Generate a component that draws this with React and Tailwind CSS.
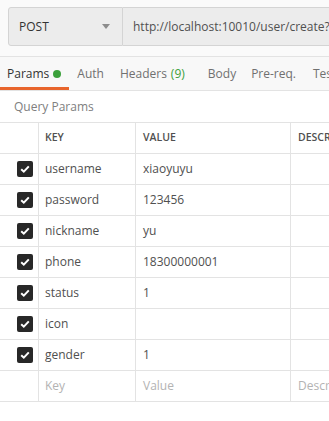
import React from "react";

const rows = [
  { key: "username", value: "xiaoyuyu" },
  { key: "password", value: "123456" },
  { key: "nickname", value: "yu" },
  { key: "phone", value: "18300000001" },
  { key: "status", value: "1" },
  { key: "icon", value: "" },
  { key: "gender", value: "1" },
];

function Check() {
  return (
    <span className="flex h-[16px] w-[16px] items-center justify-center rounded-[2px] bg-[#282828]">
      <svg width="12" height="12" viewBox="0 0 12 12">
        <path d="M2.2 6.2 L4.8 8.7 L9.8 3.4" fill="none" stroke="#fff" strokeWidth="2" />
      </svg>
    </span>
  );
}

export default function App() {
  return (
    <div
      className="h-[421px] w-[329px] overflow-hidden bg-white text-[12px] text-[#505050]"
      style={{ fontFamily: '"Open Sans", "Noto Sans", sans-serif' }}
    >
      {/* request bar */}
      <div className="h-[57px] border-b border-[#e3e3e3] bg-[#fafafa] pl-[8px] pt-[7px]">
        <div className="flex h-[39px] w-[400px]">
          <div className="flex w-[115px] items-center justify-between rounded-l-[3px] border border-[#d4d4d4] bg-[#ececec] pl-[10px] pr-[12px]">
            <span className="text-[12px] text-[#333]">POST</span>
            <svg width="8" height="5" viewBox="0 0 8 5">
              <path d="M0 0 H8 L4 5 Z" fill="#8c8c8c" />
            </svg>
          </div>
          <div className="flex flex-1 items-center border border-l-0 border-[#d4d4d4] bg-[#ececec] pl-[10px] text-[12px] text-[#505050]">
            http://localhost:10010/user/create?
          </div>
        </div>
      </div>

      {/* tabs */}
      <div className="flex h-[34px] items-stretch whitespace-nowrap border-b border-[#e3e3e3] bg-[#f8f8f8] text-[12px]">
        <div className="flex items-center border-b-[3px] border-[#e8652c] pl-[7px] pr-[8px] pt-[3px] text-[#333]">
          Params
          <span className="ml-[4px] h-[8px] w-[8px] rounded-full bg-[#3ba03b]" />
        </div>
        <div className="ml-[8px] flex items-center text-[#707070]">Auth</div>
        <div className="ml-[16px] flex items-center text-[#707070]">
          Headers <span className="ml-[4px] text-[#3ba03b]">(9)</span>
        </div>
        <div className="ml-[23px] flex items-center text-[#707070]">Body</div>
        <div className="ml-[15px] flex items-center text-[#707070]">Pre-req.</div>
        <div className="ml-[17px] flex items-center text-[#707070]">Tests</div>
      </div>

      {/* query params */}
      <div className="flex h-[31px] items-center pl-[14px] text-[12px] text-[#808080]">
        Query Params
      </div>

      <div className="w-[380px] border-t border-[#e3e3e3]">
        <div className="grid h-[31px] grid-cols-[39px_97px_155px_1fr] border-b border-[#e3e3e3] text-[10.5px] font-semibold text-[#505050]">
          <div className="border-r border-[#e3e3e3]" />
          <div className="flex items-center border-r border-[#e3e3e3] pl-[6px]">KEY</div>
          <div className="flex items-center border-r border-[#e3e3e3] pl-[7px]">VALUE</div>
          <div className="flex items-center pl-[7px]">DESCRIPTION</div>
        </div>
        {rows.map((r) => (
          <div
            key={r.key}
            className="grid h-[31px] grid-cols-[39px_97px_155px_1fr] border-b border-[#e3e3e3]"
          >
            <div className="flex items-center justify-end border-r border-[#e3e3e3] pr-[5px]">
              <Check />
            </div>
            <div className="flex items-center border-r border-[#e3e3e3] pl-[6px]">{r.key}</div>
            <div className="flex items-center border-r border-[#e3e3e3] pl-[7px]">{r.value}</div>
            <div />
          </div>
        ))}
        <div className="grid h-[31px] grid-cols-[39px_97px_155px_1fr] border-b border-[#e3e3e3] text-[#b3b3b3]">
          <div className="border-r border-[#e3e3e3]" />
          <div className="flex items-center border-r border-[#e3e3e3] pl-[6px]">Key</div>
          <div className="flex items-center border-r border-[#e3e3e3] pl-[7px]">Value</div>
          <div className="flex items-center pl-[7px]">Description</div>
        </div>
      </div>
    </div>
  );
}
